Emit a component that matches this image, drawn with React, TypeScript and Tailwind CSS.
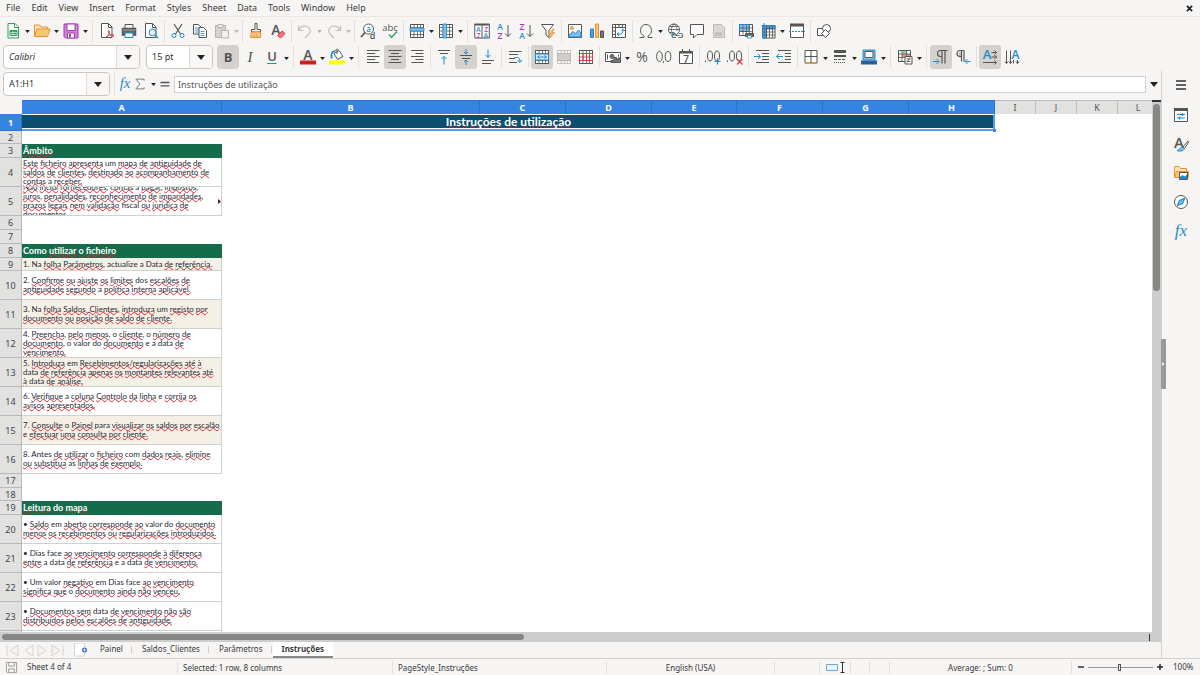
import React from 'react';
import clsx from 'clsx';

const GRAY = '#555553';
const BLUE = '#1e8bcd';
const SKY = '#83beec';
const GREEN = '#2fa05a';
const ORANGE = '#e8932f';
const PURPLE = '#a33fae';
const RED = '#e0393e';

interface IconProps {
  children: React.ReactNode;
  className?: string;
}

const Icon: React.FC<IconProps> = ({ children, className = 'h-4 w-4' }) => (
  <svg viewBox="0 0 16 16" fill="none" stroke={GRAY} className={clsx('shrink-0 overflow-visible', className)} aria-hidden="true">
    {children}
  </svg>
);

interface GlyphProps {
  x: number;
  y: number;
  size: number;
  fill?: string;
  weight?: number;
  italic?: boolean;
  serif?: boolean;
  children: string;
}

// Lettering that sits inside an icon
const Glyph: React.FC<GlyphProps> = ({ x, y, size, fill = GRAY, weight = 400, italic, serif, children }) => (
  <text
    x={x}
    y={y}
    fontSize={size}
    fill={fill}
    stroke="none"
    fontWeight={weight}
    fontStyle={italic ? 'italic' : 'normal'}
    fontFamily={serif ? 'Liberation Serif, serif' : 'Open Sans, sans-serif'}
    textAnchor="middle"
  >
    {children}
  </text>
);

const Grid: React.FC<{ color?: string }> = ({ color = GRAY }) => (
  <path d="M1.500 1.500h13v13h-13zM1.500 4.500h13M1.500 8h13M1.500 11.500h13M5 1.500v13M8.500 1.500v13M11.500 1.500v13" stroke={color} strokeWidth=".8" />
);

const icons: Record<string, React.ReactNode> = {
  new: (
    <>
      <path d="M3 .5h7l3.500 3.500v11h-10.500z" fill="#fff" stroke={GREEN} />
      <path d="M9.500 .5v4h4" stroke={GREEN} />
      <path d="M5 7.500h7v5h-7z" fill={GREEN} stroke={GREEN} />
      <path d="M5 9.500h7M5 11.500h7M8 8v4.500" stroke="#fff" strokeWidth=".6" />
    </>
  ),
  open: (
    <>
      <path d="M.5 13.500v-11.500h5l1.500 2h6.500v2" fill="#fbe3bd" stroke={ORANGE} />
      <path d="M.5 13.500l2.500-7.500h13l-2.500 7.500z" fill="#f9c674" stroke={ORANGE} />
    </>
  ),
  save: (
    <>
      <path d="M1 1h14v14h-12.500l-1.500-1.500z" fill="#cf83d8" stroke={PURPLE} />
      <path d="M4 1h8v6.500h-8z" fill="#fff" stroke={PURPLE} />
      <path d="M4.500 10h7v5h-7z" fill="#fff" stroke={PURPLE} />
      <path d="M6 11v3.500h2v-3.500z" fill={PURPLE} stroke="none" />
    </>
  ),
  pdf: (
    <>
      <path d="M2.500 .5h7l3.500 3.500v10.500h-10.500z" fill="#fff" />
      <path d="M9.500 .5v4h3.500" />
      <path d="M7 14.500c3-2 4-5 3-7-1-1-1 1 0 2.500s3 3.500 5 3.500M7 14c2-2 5-2.500 8-2" stroke={RED} />
    </>
  ),
  print: (
    <>
      <path d="M4 5.500v-4h8v4" fill="#fff" />
      <path d="M1.500 5.500h13v6.500h-13z" fill="#666" strokeWidth="1.500" />
      <path d="M1.500 7h13" stroke="#aaa" />
      <path d="M4 10h8v4.500h-8z" fill="#fff" stroke={BLUE} />
    </>
  ),
  preview: (
    <>
      <path d="M2.500 .5h7l3.500 3.500v10.500h-10.500z" fill="#fff" />
      <path d="M9.500 .5v4h3.500" />
      <circle cx="9.500" cy="9.500" r="3.300" fill="#e8f3fb" stroke={BLUE} />
      <path d="M12 12l3 3" stroke={BLUE} strokeWidth="1.400" />
    </>
  ),
  cut: (
    <>
      <path d="M4 1l6.500 10M12 1l-6.500 10" strokeWidth="1.200" />
      <circle cx="4" cy="12.500" r="2" stroke={BLUE} />
      <circle cx="12" cy="12.500" r="2" stroke={BLUE} />
    </>
  ),
  copy: (
    <>
      <path d="M1.500 1.500h5l2.500 2.500v7h-7.500z" fill="#fff" />
      <path d="M3 5h4M3 7h4M3 9h4" stroke={BLUE} strokeWidth=".8" />
      <path d="M7 4.500h4.500l3 3v7h-7.500z" fill="#fff" />
      <path d="M8.500 8.500h4M8.500 10.500h4M8.500 12.500h4" stroke={BLUE} strokeWidth=".8" />
    </>
  ),
  paste: (
    <>
      <path d="M1.500 2.500h10v12h-10z" fill="#d6d4d1" stroke="#b5b3b0" />
      <path d="M4 1.500h5v3h-5z" fill="#eee" stroke="#b5b3b0" />
      <path d="M7.500 7.500h7v7.500h-7z" fill="#f1f0ef" stroke="#b5b3b0" />
    </>
  ),
  clone: (
    <>
      <path d="M7 .5h2v6h3.500v2.500h-9v-2.500h3.500z" fill="#fff" />
      <path d="M3.500 9h9v5.500h-10z" fill="#f9c98a" stroke={ORANGE} />
      <path d="M6 11.500v3M9 11.500v3" stroke={ORANGE} />
    </>
  ),
  clear: (
    <>
      <Glyph x={6} y={12} size={14} weight={600}>A</Glyph>
      <path d="M7.500 12.500l4.500-4.500 3 2.500-4.500 4.500z" fill="#f2777b" stroke={RED} />
    </>
  ),
  undo: <path d="M1.500 2.500v5h5M2 7c2-4 5-4.500 8-3.500 4 1.500 4 5 2 7.500l-4 4" stroke="#c3c1be" strokeWidth="1.200" />,
  redo: <path d="M14.500 2.500v5h-5M14 7c-2-4-5-4.500-8-3.500-4 1.500-4 5-2 7.500l4 4" stroke="#c3c1be" strokeWidth="1.200" />,
  find: (
    <>
      <circle cx="8.500" cy="6" r="5" fill="#fff" />
      <path d="M5 9.500l-4 4.500" strokeWidth="1.800" />
      <Glyph x={8.500} y={8.500} size={8} fill={BLUE} weight={600}>a</Glyph>
      <Glyph x={12.500} y={15.500} size={9} weight={600}>d</Glyph>
    </>
  ),
  spell: (
    <>
      <Glyph x={8} y={7.500} size={9.500}>abc</Glyph>
      <path d="M7 11.500l2.500 3 5.500-6" stroke={GREEN} strokeWidth="1.300" />
    </>
  ),
  row: (
    <>
      <path d="M1.500 1.500h13v13h-13z" fill="#fff" />
      <Grid />
      <path d="M1 5h14v3h-14z" fill={SKY} stroke={BLUE} strokeWidth=".8" />
    </>
  ),
  column: (
    <>
      <path d="M1.500 1.500h13v13h-13z" fill="#fff" />
      <Grid />
      <path d="M5 1h3.500v14h-3.500z" fill={SKY} stroke={BLUE} strokeWidth=".8" />
    </>
  ),
  sort: (
    <>
      <path d="M.8 1.500h14.500v13.500h-14.500zM8 1.500v13.500" fill="#fff" />
      <path d="M.5 1.500h15" strokeWidth="2" />
      <Glyph x={4.500} y={8.500} size={6.500} fill={BLUE} weight={600}>A</Glyph>
      <Glyph x={4.500} y={14.500} size={6.500} fill={PURPLE} weight={600}>Z</Glyph>
      <Glyph x={12} y={8.500} size={6.500} fill={PURPLE} weight={600}>Z</Glyph>
      <Glyph x={12} y={14.500} size={6.500} fill={BLUE} weight={600}>A</Glyph>
    </>
  ),
  asc: (
    <>
      <Glyph x={4} y={7} size={8.500} fill={BLUE} weight={600}>A</Glyph>
      <Glyph x={4} y={15.500} size={8.500} fill={PURPLE} weight={600}>Z</Glyph>
      <path d="M12 2v11.500M9 10.500l3 3 3-3" />
    </>
  ),
  desc: (
    <>
      <Glyph x={4} y={7} size={8.500} fill={PURPLE} weight={600}>Z</Glyph>
      <Glyph x={4} y={15.500} size={8.500} fill={BLUE} weight={600}>A</Glyph>
      <path d="M12 2v11.500M9 10.500l3 3 3-3" />
    </>
  ),
  filter: (
    <>
      <path d="M1.500 1.500h12l-4.500 6v7l-3-2.500v-4.500z" fill="#fff" />
      <path d="M13 6l-4 5h2.500l-2 4.500 5-6h-2.500l2-3.500z" fill="#fbc57c" stroke={ORANGE} strokeWidth=".8" />
    </>
  ),
  image: (
    <>
      <path d="M1.500 1.500h13v13h-13z" fill="#fff" />
      <circle cx="5" cy="5" r="1.500" fill="#f9c674" stroke={ORANGE} />
      <path d="M2 14v-2l4-3.500 2.500 2 3-3.500 2.500 3v4z" fill={SKY} stroke={BLUE} />
    </>
  ),
  chart: (
    <>
      <path d="M1.500 6h3v8.500h-3z" fill="#4f9bd6" stroke={BLUE} />
      <path d="M6.500 1h3v13.500h-3z" fill="#fbc57c" stroke={ORANGE} />
      <path d="M11.500 8h3v6.500h-3z" fill="#777" />
    </>
  ),
  pivot: (
    <>
      <path d="M1.500 1.500h13v13h-13zM1.500 4.500h13M4.500 1.500v13M8 1.500v3M11.500 1.500v3M1.500 8h3M1.500 11.500h3" fill="#fff" />
      <path d="M6.500 11c4 1 5.500-1 5.500-4M10.500 8l1.500-2 2 2M8 9.500l-2 1.500 2 2" stroke={BLUE} />
    </>
  ),
  omega: <path d="M1.500 14.500h4.500v-1.500c-2.500-1.500-3.500-3-3.500-5.500 0-3.500 2.500-6 5.500-6s5.500 2.500 5.500 6c0 2.500-1 4-3.500 5.500v1.500h4.500" />,
  link: (
    <>
      <circle cx="7" cy="6.500" r="5.500" fill="#fff" />
      <path d="M1.500 6.500h11M2.500 3.500h9M2.500 9.500h5M7 1c-4 4-3 8 0 11M7 1c3 2 3 5 3 7" strokeWidth=".8" />
      <path d="M8.500 10.500h-1.500a2 2 0 000 4h2M12 10.500h1.500a2 2 0 010 4h-2M8.500 12.500h4" stroke={BLUE} strokeWidth="1.200" />
    </>
  ),
  comment: <path d="M1.500 1.500h13v10h-6.500l-3.500 3.500v-3.500h-3z" fill="#fff" />,
  header: (
    <>
      <path d="M2.500 1.500h8l3 3v10h-11z" fill="#dad8d6" stroke="#bdbbb8" />
      <path d="M4 9h7v4h-7z" fill="#c5c3c0" stroke="none" />
    </>
  ),
  printArea: (
    <>
      <path d="M1.500 1.500h13v11h-13z" fill="#fff" />
      <path d="M1.500 1.500h9.500v7h-9.500z" fill={SKY} stroke={BLUE} />
      <path d="M1.500 5h13M1.500 8.500h13M5 1.500v11M8.500 1.500v11M11.500 1.500v11" strokeWidth=".7" />
      <path d="M7.500 10.500h8v3h-8z" fill="#666" />
      <path d="M9.500 12.500h4v2.500h-4z" fill="#fff" stroke={BLUE} strokeWidth=".8" />
    </>
  ),
  freeze: (
    <>
      <path d="M2.500 2.500h12.500v12.500h-12.500z" fill="#fff" />
      <path d="M2.500 2.500h12.500v3h-8.500v9.500h-4z" fill="#4f9bd6" stroke={BLUE} />
      <path d="M2.500 6h12.500M2.500 9h12.500M2.500 12h12.500M6.500 2.500v12.500M9.500 2.500v12.500M12.500 2.500v12.500" strokeWidth=".8" />
      <path d="M4 0v5M1.500 2.500h5" stroke={BLUE} />
    </>
  ),
  split: (
    <>
      <path d="M1.500 2v12.500h13v-12.500" fill="#fff" />
      <path d="M1 2h14" strokeWidth="3" />
      <path d="M0 8.500h16" stroke={BLUE} strokeDasharray="2 1" />
    </>
  ),
  shapes: (
    <>
      <path d="M1.500 5.500h7v7h-7z" fill="#fff" />
      <circle cx="10.500" cy="5.500" r="4" fill="#fff" />
      <path d="M9.500 6.500l4 4-4 4-4-4z" fill="#fff" />
    </>
  ),
  bold: <Glyph x={8} y={12.500} size={13} weight={700}>B</Glyph>,
  italic: <Glyph x={8} y={13} size={15} italic serif>I</Glyph>,
  underline: (
    <>
      <Glyph x={8} y={12} size={13} weight={600}>U</Glyph>
      <path d="M3 14.500h9.500" stroke={BLUE} />
    </>
  ),
  fontColor: (
    <>
      <Glyph x={8} y={10.500} size={14} weight={600}>A</Glyph>
      <path d="M0 13.500h16" stroke="#c9211e" strokeWidth="4" />
    </>
  ),
  fillColor: (
    <>
      <path d="M5 4.500l5-3 4 6-5.500 3z" fill="#fff" />
      <path d="M8 1v4M6 2c1-2 3-2 3-1" />
      <path d="M6 2.500c-4-.5-3.500 4-3.500 7" stroke={BLUE} strokeWidth="1.800" />
      <path d="M0 13.500h16" stroke="#ffff00" strokeWidth="4" />
    </>
  ),
  left: <path d="M2 1.500h12.500M2 4.500h8M2 7.500h12.500M2 10.500h8M2 13.500h12" />,
  center: <path d="M1.500 1.500h13M4 4.500h8M1.500 7.500h13M4 10.500h8M1.500 13.500h13" />,
  right: <path d="M2 1.500h12.500M6.500 4.500h8M2 7.500h12.500M6.500 10.500h8M2.500 13.500h12" />,
  top: (
    <>
      <path d="M2 1.500h12M4 4.500h8" />
      <path d="M8 15.500v-8M5.500 10l2.500-2.500 2.500 2.500" stroke={BLUE} />
    </>
  ),
  middle: (
    <>
      <path d="M2 6.500h12M4 9.500h8" />
      <path d="M8 0v5M6 3l2 2 2-2M8 16v-5M6 13l2-2 2 2" stroke={BLUE} />
    </>
  ),
  bottom: (
    <>
      <path d="M2 11.500h12M2 14.500h9" />
      <path d="M8 .5v8M5.500 6l2.500 2.500 2.500-2.500" stroke={BLUE} />
    </>
  ),
  wrap: (
    <>
      <path d="M2 2.500h12.500M2 5.500h9M2 9.500h6M2 13.500h8" />
      <path d="M7.500 8.500h3q2.500 0 2.500 4.500M10.500 11.500l2.500 2 2-2.500" stroke={BLUE} />
    </>
  ),
  merge: (
    <>
      <path d="M1.500 1.500h13v13h-13z" fill="#fff" />
      <Grid />
      <path d="M1.500 5h13v6h-13z" fill="#d9ecfa" stroke={BLUE} />
      <path d="M4 8h8M5.500 6.500l-2 1.500 2 1.500M10.500 6.500l2 1.500-2 1.500" stroke={BLUE} />
    </>
  ),
  mergeOff: (
    <>
      <Grid color="#b9b7b4" />
      <path d="M1.500 4.500h13v7h-13z" fill="#cfcdca" stroke="#b9b7b4" />
    </>
  ),
  unmerge: (
    <>
      <path d="M1.500 1.500h13v13h-13z" fill="#fff" />
      <Grid />
      <path d="M1.500 4.500h13v7h-13zM5 4.500v7M8.500 4.500v7M11.500 4.500v7" stroke={RED} />
    </>
  ),
  currency: (
    <>
      <path d="M.5 3.500h15v9h-15z" fill="#fff" />
      <circle cx="7" cy="7.500" r="2" fill="#777" />
      <path d="M2.500 5.500v5M13.500 5.500v2" />
      <path d="M6 13.500v-2h3v-3h2.500v2h1.500v-1.500h2.500v4.500z" fill="#777" />
    </>
  ),
  percent: <Glyph x={8} y={12.500} size={14}>%</Glyph>,
  decimal: (
    <>
      <ellipse cx="3.500" cy="7.500" rx="2.800" ry="5" />
      <ellipse cx="12" cy="7.500" rx="2.800" ry="5" />
      <path d="M7.800 12l-.6 2" />
    </>
  ),
  date: (
    <>
      <path d="M1.500 2.500h13v12h-13z" fill="#fff" />
      <path d="M1.500 3.500h13" strokeWidth="2" />
      <path d="M4.500 0v3M11.500 0v3" />
      <Glyph x={8} y={13.500} size={10} weight={600}>7</Glyph>
    </>
  ),
  addDecimal: (
    <>
      <path d="M.5 11.500v1.500" />
      <ellipse cx="5" cy="7" rx="2.500" ry="5" />
      <ellipse cx="12" cy="7" rx="2.500" ry="5" />
      <path d="M12.500 9.500v6M9.500 12.500h6" stroke={BLUE} strokeWidth="1.200" />
    </>
  ),
  delDecimal: (
    <>
      <path d="M.5 11.500v1.500" />
      <ellipse cx="5" cy="7" rx="2.500" ry="5" />
      <ellipse cx="12" cy="7" rx="2.500" ry="5" />
      <path d="M10 10l5.500 5.500M15.500 10l-5.500 5.500" stroke={RED} strokeWidth="1.200" />
    </>
  ),
  indent: (
    <>
      <path d="M2 1.500h13M8 4.500h7M8 7.500h7M8 10.500h7M2 13.500h13" />
      <path d="M0 7.500h6.500M4 5l2.500 2.500-2.500 2.500" stroke={BLUE} />
    </>
  ),
  outdent: (
    <>
      <path d="M2 1.500h13M9 4.500h6M9 7.500h6M9 10.500h6M2 13.500h13" />
      <path d="M7 7.500h-6.500M3 5l-2.500 2.500 2.500 2.500" stroke={BLUE} />
    </>
  ),
  border: (
    <>
      <path d="M2 1.500h12v12.500h-12zM8 1.500v12.500M2 7.500h12" fill="#fff" />
      <path d="M2 14h12" stroke={ORANGE} />
    </>
  ),
  borderStyle: (
    <>
      <path d="M2 2.500h12" strokeWidth="3" />
      <path d="M2 7h12" strokeWidth="2" />
      <path d="M2 10.500h12" strokeDasharray="3 1" />
      <path d="M2 13.500h12" strokeDasharray="1 1" />
    </>
  ),
  borderColor: (
    <>
      <path d="M2 11v-10h12v10z" fill={SKY} stroke={BLUE} />
      <path d="M4 2.500h8v6h-8z" fill="#fff" />
      <path d="M0 13.500h16" stroke="#2a6099" strokeWidth="4" />
    </>
  ),
  conditional: (
    <>
      <path d="M1.500 1.500h12v11h-12z" fill="#fff" />
      <path d="M5 2h5v3h-5z" fill="#8fd6a3" stroke="none" />
      <path d="M5 5h8v3h-8z" fill="#f28b8d" stroke="none" />
      <path d="M1.500 5h12M1.500 8.500h12M5 1.500v11M9.500 1.500v5" strokeWidth=".8" />
      <path d="M8 7.500h7v7.500h-7z" fill="#fff" />
      <path d="M9.500 10h4M9.500 12.500h4M13 8.500l-3 5" strokeWidth=".9" />
    </>
  ),
  ltr: (
    <>
      <path d="M14.500 1.500h-7a3 3 0 000 6h1.500M9 1.500v13M12 1.500v13" strokeWidth="1.200" />
      <path d="M0 12.500h6M3.500 10l2.500 2.500-2.500 2.500" stroke={BLUE} />
    </>
  ),
  rtl: (
    <>
      <path d="M9 1.500h-4a3 3 0 000 6h1.500M6.500 1.500v11M9 1.500v11" strokeWidth="1.200" />
      <path d="M4 3h2v4h-2z" fill="#bbb" stroke="none" />
      <path d="M15.500 12.500h-5M12.500 10l-2.500 2.500 2.500 2.500" stroke={BLUE} />
    </>
  ),
  dirH: (
    <>
      <Glyph x={5} y={10} size={13} fill={BLUE} weight={600}>A</Glyph>
      <path d="M9.500 3.500h5M9.500 8h5M1 13.500h13M12.500 1.500l2 2-2 2M12.500 6l2 2-2 2M12.500 11.500l2 2-2 2" />
    </>
  ),
  dirV: (
    <>
      <Glyph x={11.500} y={9.500} size={12} fill={BLUE} weight={600}>A</Glyph>
      <path d="M2.500 1.500v13M6.500 1.500v13M9.500 11v3.500M13.500 11v3.500M.8 12.500l1.700 2 1.700-2M4.800 12.500l1.700 2 1.700-2M11.800 12.500l1.700 2 1.700-2" />
    </>
  ),
  formula: <Glyph x={8} y={12.500} size={17} fill={BLUE} italic serif>fx</Glyph>,
  sum: <path d="M13.500 3.500v-2h-11l5.500 6.500-5.500 6.500h11v-2" />,
  equals: <path d="M2 6h12M2 10.500h12" strokeWidth="1.800" />,
  menu: <path d="M3 3h10M3 7h10M3 11h10" strokeWidth="1.600" stroke="#333" />,
  properties: (
    <>
      <path d="M1.500 1.500h13v13h-13z" fill="#fff" />
      <path d="M1 2.500h14" strokeWidth="3" />
      <path d="M4 7.500h8M4 11h8" stroke={BLUE} />
      <path d="M9.500 6v3M6.500 9.500v3" stroke={BLUE} strokeWidth="1.400" />
    </>
  ),
  styles: (
    <>
      <Glyph x={6} y={11.500} size={15} weight={600}>A</Glyph>
      <path d="M15 5l-5 6 1.500 1.500 4-6z" fill="#fff" />
      <path d="M4 14.500c2 0 3-3 5.500-3.500l2 1.500c-1 3-5 3-7.500 2z" fill={SKY} stroke={BLUE} />
    </>
  ),
  gallery: (
    <>
      <path d="M1.500 12.500v-11h4.500l1.500 2h6v3" fill="#fbe3bd" stroke={ORANGE} />
      <path d="M1.500 12.500l2-6h12v6z" fill="#f9c674" stroke={ORANGE} />
      <path d="M6.500 7.500h8v7h-8z" fill="#fff" />
      <path d="M7 14v-2l2.500-2 2 1.500 2.500-2v4.500z" fill={BLUE} stroke="none" />
    </>
  ),
  navigator: (
    <>
      <circle cx="8" cy="8" r="6.500" fill="#fff" />
      <path d="M11.500 4.500l-2 5-5 2 2-5z" fill={SKY} stroke={BLUE} strokeWidth="1.200" />
    </>
  ),
};

const Caret: React.FC<{ faded?: boolean; large?: boolean }> = ({ faded, large }) => (
  <svg viewBox="0 0 8 5" className={large ? 'h-[5px] w-2' : 'h-[3px] w-[5px]'} fill={faded ? '#b8b6b3' : '#222'} aria-hidden="true">
    <path d="M0 0h8l-4 5z" />
  </svg>
);

interface Tool {
  icon: string;
  label: string;
  menu?: boolean;
  active?: boolean;
  disabled?: boolean;
}

const standardTools: Tool[][] = [
  [
    { icon: 'new', label: 'New', menu: true },
    { icon: 'open', label: 'Open', menu: true },
    { icon: 'save', label: 'Save', menu: true },
  ],
  [
    { icon: 'pdf', label: 'Export as PDF' },
    { icon: 'print', label: 'Print' },
    { icon: 'preview', label: 'Print Preview' },
  ],
  [
    { icon: 'cut', label: 'Cut' },
    { icon: 'copy', label: 'Copy' },
    { icon: 'paste', label: 'Paste', menu: true, disabled: true },
  ],
  [
    { icon: 'clone', label: 'Clone Formatting' },
    { icon: 'clear', label: 'Clear Direct Formatting' },
  ],
  [
    { icon: 'undo', label: 'Undo', menu: true, disabled: true },
    { icon: 'redo', label: 'Redo', menu: true, disabled: true },
  ],
  [
    { icon: 'find', label: 'Find and Replace' },
    { icon: 'spell', label: 'Spelling' },
  ],
  [
    { icon: 'row', label: 'Row', menu: true },
    { icon: 'column', label: 'Column', menu: true },
  ],
  [
    { icon: 'sort', label: 'Sort' },
    { icon: 'asc', label: 'Sort Ascending' },
    { icon: 'desc', label: 'Sort Descending' },
    { icon: 'filter', label: 'AutoFilter' },
  ],
  [
    { icon: 'image', label: 'Image' },
    { icon: 'chart', label: 'Chart' },
    { icon: 'pivot', label: 'Pivot Table' },
  ],
  [
    { icon: 'omega', label: 'Special Character', menu: true },
    { icon: 'link', label: 'Hyperlink' },
    { icon: 'comment', label: 'Comment' },
    { icon: 'header', label: 'Headers and Footers', disabled: true },
  ],
  [
    { icon: 'printArea', label: 'Define Print Area' },
    { icon: 'freeze', label: 'Freeze Rows and Columns', menu: true },
    { icon: 'split', label: 'Split Window' },
  ],
  [{ icon: 'shapes', label: 'Show Draw Functions' }],
];

const formatTools: Tool[][] = [
  [
    { icon: 'bold', label: 'Bold', active: true },
    { icon: 'italic', label: 'Italic' },
    { icon: 'underline', label: 'Underline', menu: true },
  ],
  [
    { icon: 'fontColor', label: 'Font Color', menu: true },
    { icon: 'fillColor', label: 'Background Color', menu: true },
  ],
  [
    { icon: 'left', label: 'Align Left' },
    { icon: 'center', label: 'Center Horizontally', active: true },
    { icon: 'right', label: 'Align Right' },
  ],
  [
    { icon: 'top', label: 'Align Top' },
    { icon: 'middle', label: 'Center Vertically', active: true },
    { icon: 'bottom', label: 'Align Bottom' },
  ],
  [{ icon: 'wrap', label: 'Wrap Text' }],
  [
    { icon: 'merge', label: 'Merge and Center Cells', active: true },
    { icon: 'mergeOff', label: 'Merge Cells', disabled: true },
    { icon: 'unmerge', label: 'Unmerge Cells' },
  ],
  [
    { icon: 'currency', label: 'Format as Currency', menu: true },
    { icon: 'percent', label: 'Format as Percent' },
    { icon: 'decimal', label: 'Format as Number' },
    { icon: 'date', label: 'Format as Date' },
  ],
  [
    { icon: 'addDecimal', label: 'Add Decimal Place' },
    { icon: 'delDecimal', label: 'Delete Decimal Place' },
  ],
  [
    { icon: 'indent', label: 'Increase Indent' },
    { icon: 'outdent', label: 'Decrease Indent' },
  ],
  [
    { icon: 'border', label: 'Borders', menu: true },
    { icon: 'borderStyle', label: 'Border Style', menu: true },
    { icon: 'borderColor', label: 'Border Color', menu: true },
  ],
  [{ icon: 'conditional', label: 'Conditional', menu: true }],
  [
    { icon: 'ltr', label: 'Left-To-Right', active: true },
    { icon: 'rtl', label: 'Right-To-Left' },
  ],
  [
    { icon: 'dirH', label: 'Text direction from left to right', active: true },
    { icon: 'dirV', label: 'Text direction from top to bottom' },
  ],
];

const Separator: React.FC<{ wide?: boolean }> = ({ wide }) => (
  <span className={clsx('h-[22px] w-px shrink-0 bg-[#e3e0dd]', wide ? 'mx-[3px]' : 'mx-0.5')} />
);

const endsWithMenu = (group: Tool[]) => {
  const last = group[group.length - 1];
  return Boolean(last.menu && !last.disabled);
};

const ToolGroups: React.FC<{ groups: Tool[][] }> = ({ groups }) => (
  <>
    {groups.map((group, i) => (
      <React.Fragment key={i}>
        {i > 0 && <Separator wide={endsWithMenu(groups[i - 1])} />}
        {group.map(tool => (
          <React.Fragment key={tool.icon}>
            <button
              type="button"
              aria-label={tool.label}
              disabled={tool.disabled}
              className={clsx('flex h-6 w-[22px] shrink-0 items-center justify-center rounded-[3px]', tool.active && 'bg-[#d5d2ce]')}
            >
              <Icon>{icons[tool.icon]}</Icon>
            </button>
            {tool.menu && (
              <button type="button" aria-label={`${tool.label} options`} className="flex h-6 w-[7px] shrink-0 items-center justify-center pt-0.5">
                <Caret faded={tool.disabled} />
              </button>
            )}
          </React.Fragment>
        ))}
      </React.Fragment>
    ))}
  </>
);

interface ComboProps {
  label: string;
  value: string;
  className: string;
  italic?: boolean;
}

const Combo: React.FC<ComboProps> = ({ label, value, className, italic }) => (
  <div className={clsx('flex h-6 shrink-0 overflow-hidden rounded border border-[#cdc7c2] bg-white', className)}>
    <input aria-label={label} defaultValue={value} className={clsx('min-w-0 flex-1 px-[5px] text-[#333] outline-none', italic && 'italic')} />
    <button type="button" aria-label={`${label} list`} className="flex w-[23px] items-center justify-center border-l border-[#dedbd8] bg-[#f8f7f6]">
      <Caret large />
    </button>
  </div>
);

interface SheetRow {
  height: string;
  kind?: 'title' | 'head' | 'plain' | 'band';
  lines?: string[];
  overflow?: boolean;
}

// Words between brackets are flagged by the spell checker
const rows: SheetRow[] = [
  { height: 'h-[17px]', kind: 'title', lines: ['[Instruções] [de] [utilização]'] },
  { height: 'h-[13px]' },
  { height: 'h-[14px]', kind: 'head', lines: ['[Âmbito]'] },
  {
    height: 'h-[29px]',
    kind: 'plain',
    lines: [
      '[Este] [ficheiro] [apresenta] um [mapa] [de] [antiguidade] [de]',
      '[saldos] [de] [clientes], [destinado] [ao] [acompanhamento] [de]',
      '[contas] a [receber.]',
    ],
  },
  {
    height: 'h-[29px]',
    kind: 'plain',
    overflow: true,
    lines: [
      '[Não] [inclui] [fornecedores], [contas] a [pagar], [impostos],',
      '[juros], [penalidades], [reconhecimento] [de] [imparidades],',
      '[prazos] [legais] [nem] [validação] fiscal [ou] [jurídica] [de]',
      '[documentos].',
    ],
  },
  { height: 'h-[14px]' },
  { height: 'h-[14px]' },
  { height: 'h-[14px]', kind: 'head', lines: ['Como [utilizar] o [ficheiro]'] },
  { height: 'h-[13px]', kind: 'band', lines: ['1. Na [folha] [Parâmetros], actualize a Data [de] [referência.]'] },
  {
    height: 'h-[29px]',
    kind: 'plain',
    lines: ['2. [Confirme] [ou] [ajuste] [os] [limites] dos [escalões] [de]', '[antiguidade] [segundo] a [política] [interna] [aplicável.]'],
  },
  {
    height: 'h-[29px]',
    kind: 'band',
    lines: ['3. Na [folha] [Saldos_Clientes], [introduza] um [registo] [por]', '[documento] [ou] [posição] [de] [saldo] [de] [cliente.]'],
  },
  {
    height: 'h-[29px]',
    kind: 'plain',
    lines: ['4. [Preencha], [pelo] [menos], o [cliente], o [número] [de]', '[documento], o valor do [documento] e a data [de]', '[vencimento.]'],
  },
  {
    height: 'h-[29px]',
    kind: 'band',
    lines: [
      '5. [Introduza] em [Recebimentos/regularizações] [até] [à]',
      'data [de] [referência] [apenas] [os] [montantes] [relevantes] [até]',
      '[à] data [de] [análise.]',
    ],
  },
  {
    height: 'h-[29px]',
    kind: 'plain',
    lines: ['6. [Verifique] a [coluna] [Controlo] [da] [linha] e [corrija] [os]', '[avisos] [apresentados.]'],
  },
  {
    height: 'h-[29px]',
    kind: 'band',
    lines: ['7. [Consulte] o [Painel] para [visualizar] [os] [saldos] [por] [escalão]', 'e [efectuar] [uma] [consulta] [por] [cliente.]'],
  },
  {
    height: 'h-[29px]',
    kind: 'plain',
    lines: ['8. Antes [de] [utilizar] o [ficheiro] com [dados] [reais], [elimine]', '[ou] [substitua] as [linhas] [de] [exemplo.]'],
  },
  { height: 'h-[14px]' },
  { height: 'h-[13px]' },
  { height: 'h-[14px]', kind: 'head', lines: ['[Leitura] do [mapa]'] },
  {
    height: 'h-[29px]',
    kind: 'plain',
    lines: ['• [Saldo] em [aberto] [corresponde] [ao] valor do [documento]', '[menos] [os] [recebimentos] [ou] [regularizações] [introduzidos.]'],
  },
  {
    height: 'h-[29px]',
    kind: 'plain',
    lines: ['• Dias face [ao] [vencimento] [corresponde] [à] [diferença]', '[entre] a data [de] [referência] e a data [de] [vencimento.]'],
  },
  {
    height: 'h-[29px]',
    kind: 'plain',
    lines: ['• Um valor [negativo] em Dias face [ao] [vencimento]', '[significa] [que] o [documento] [ainda] [não] [venceu.]'],
  },
  {
    height: 'h-[29px]',
    kind: 'plain',
    lines: ['• [Documentos] [sem] data [de] [vencimento] [não] [são]', '[distribuídos] [pelos] [escalões] [de] [antiguidade.]'],
  },
  { height: 'h-[29px]', kind: 'plain' },
];

const columns = [
  { name: 'A', width: 'w-[200px]' },
  { name: 'B', width: 'w-[258px]' },
  { name: 'C', width: 'w-[86px]' },
  { name: 'D', width: 'w-[86px]' },
  { name: 'E', width: 'w-[85px]' },
  { name: 'F', width: 'w-[86px]' },
  { name: 'G', width: 'w-[86px]' },
  { name: 'H', width: 'w-[86px]' },
  { name: 'I', width: 'w-[41px]' },
  { name: 'J', width: 'w-[41px]' },
  { name: 'K', width: 'w-[41px]' },
  { name: 'L', width: 'w-[41px]' },
];

const SpellText: React.FC<{ text: string }> = ({ text }) => (
  <>
    {text.split(/(\[[^\]]+\])/).map((part, i) =>
      part.startsWith('[') ? (
        <span key={i} className="underline decoration-[#e0262b] decoration-wavy decoration-1 -underline-offset-1 [text-decoration-skip-ink:none]">
          {part.slice(1, -1)}
        </span>
      ) : (
        part
      )
    )}
  </>
);

const cellStyles = {
  title: 'bg-[#0b4f6c] text-white font-bold text-[12px] leading-[15px]',
  head: 'bg-[#146c4b] text-white font-bold text-[9px] leading-[11px] border-b border-[#146c4b]',
  plain: 'bg-white text-[#1f2937] text-[8px] leading-[9px] border-b border-r border-[#ccd3d0]',
  band: 'bg-[#f5f0e6] text-[#1f2937] text-[8px] leading-[9px] border-b border-r border-[#ccd3d0]',
};

const Sheet = () => (
  <div className="min-h-0 min-w-0 flex-1 overflow-hidden bg-white">
    <table className="w-[1159px] table-fixed border-separate border-spacing-0">
      <thead>
        <tr className="h-[14px] text-[9px] leading-[9px]">
          <th className="w-[22px] bg-[#f6f5f4] p-0" aria-label="Select all" />
          {columns.map((col, i) => (
            <th
              key={col.name}
              scope="col"
              className={clsx(
                'border-r border-t p-0',
                col.width,
                i < 8 ? 'border-[#2a72cc] bg-[#3584e4] font-bold text-white' : 'border-[#bdbdbd] bg-[#e1e1e0] font-normal text-[#555]'
              )}
            >
              {col.name}
            </th>
          ))}
        </tr>
      </thead>
      <tbody>
        {rows.map((row, i) => (
          <tr key={i} className={row.height}>
            <th
              scope="row"
              className={clsx(
                'border-b border-r p-0 text-[9px] leading-[9px]',
                i === 0 ? 'border-[#2a72cc] bg-[#3584e4] font-bold text-white' : 'border-[#b9b9b9] bg-[#e1e1e0] font-normal text-[#444]'
              )}
            >
              {i + 1}
            </th>
            {row.kind === 'title' && (
              <td colSpan={8} className={clsx('relative p-0 text-center align-top font-[Lato,sans-serif]', cellStyles.title)}>
                <SpellText text={row.lines![0]} />
                <span className="absolute inset-0 border-b-2 border-r-2 border-t border-[#5b9df0] border-t-white" />
                <span className="absolute bottom-0.5 left-0 right-0.5 h-px bg-white" />
                <span className="absolute -bottom-px -right-px h-[3px] w-[3px] bg-[#3584e4]" />
              </td>
            )}
            {row.kind && row.kind !== 'title' && (
              <td className={clsx('relative p-0 font-[Lato,sans-serif]', cellStyles[row.kind])}>
                <div className="absolute inset-0 flex flex-col justify-center overflow-hidden whitespace-nowrap px-px">
                  {row.lines?.map(line => (
                    <div key={line}>
                      <SpellText text={line} />
                    </div>
                  ))}
                </div>
                {row.overflow && (
                  <svg viewBox="0 0 3 5" className="absolute right-0 top-3 h-[5px] w-[3px]" fill="#5b1a1a" aria-hidden="true">
                    <path d="M0 0l3 2.500-3 2.500z" />
                  </svg>
                )}
              </td>
            )}
          </tr>
        ))}
      </tbody>
    </table>
  </div>
);

const tabs = ['Painel', 'Saldos_Clientes', 'Parâmetros', 'Instruções'];

const SheetTabs = () => (
  <div className="flex h-4 shrink-0 items-stretch">
    <div className="flex w-[74px] items-center pl-[5px]">
      {['M2 2v11M13 2l-8 5.500 8 5.500z', 'M13 2l-8 5.500 8 5.500z', 'M3 2l8 5.500-8 5.500z', 'M13 2v11M2 2l8 5.500-8 5.500z'].map((d, i) => (
        <button key={i} type="button" aria-label={['First sheet', 'Previous sheet', 'Next sheet', 'Last sheet'][i]} disabled className="w-[15px]">
          <svg viewBox="0 0 15 15" className="h-[15px] w-[15px]" fill="none" stroke="#d5d3d0" aria-hidden="true">
            <path d={d} />
          </svg>
        </button>
      ))}
    </div>
    <button type="button" aria-label="Add sheet" className="flex w-[17px] items-center">
      <svg viewBox="0 0 14 14" className="h-[14px] w-[14px]" aria-hidden="true">
        <path d="M.5 0h10v13h-10z" fill="#fff" stroke="#dad8d5" />
        <circle cx="10.500" cy="7" r="2.500" fill="#2f6fc0" />
        <path d="M10.500 5.500v3M9 7h3" stroke="#fff" strokeWidth=".8" />
      </svg>
    </button>
    <div className="flex gap-px">
      {tabs.map((tab, i) => (
        <button
          key={tab}
          type="button"
          className={clsx(
            'flex items-center px-[9px] text-[8px] leading-[10px]',
            i === 3 ? 'border-b-2 border-[#888] bg-white font-bold' : 'pb-0.5',
            i < 3 && 'relative after:absolute after:right-0 after:top-1 after:h-[7px] after:w-px after:bg-[#cfccc9]'
          )}
        >
          {tab}
        </button>
      ))}
    </div>
  </div>
);

const sidebarTools = [
  ['menu', 'Sidebar Settings'],
  ['properties', 'Properties'],
  ['styles', 'Styles'],
  ['gallery', 'Gallery'],
  ['navigator', 'Navigator'],
  ['formula', 'Functions'],
];

const Sidebar = () => (
  <aside className="relative flex w-[39px] shrink-0 flex-col items-center border-l border-[#d3d0cd]">
    {sidebarTools.map(([icon, label]) => (
      <button key={icon} type="button" aria-label={label} className="flex h-[29px] w-7 items-center justify-center">
        <Icon>{icons[icon]}</Icon>
      </button>
    ))}
    <button type="button" aria-label="Hide sidebar" className="absolute -left-px top-[268px] flex h-[50px] w-[5px] items-center justify-center bg-[#999]">
      <svg viewBox="0 0 3 4" className="h-1 w-[3px]" fill="#e8e8e8" aria-hidden="true">
        <path d="M0 0l3 2-3 2z" />
      </svg>
    </button>
  </aside>
);

const StatusBar = () => (
  <footer className="flex h-[17px] shrink-0 items-center border-t border-[#d3d0cd] text-[8px] leading-[14px] [&>*]:h-[13px] [&>*+*]:border-l [&>*+*]:border-[#e3e0dd]">
    <div className="flex grow basis-[177px] items-center">
      <svg viewBox="0 0 14 14" className="ml-[5px] mr-[9px] h-[13px] w-[13px]" fill="none" stroke="#9a9895" aria-hidden="true">
        <path d="M1.500 1.500h11v11h-10l-1-1zM4 1.500v4h6v-4M4 12.500v-4h6v4" />
      </svg>
      Sheet 4 of 4
    </div>
    <div className="grow basis-[215px] pl-[5px]">Selected: 1 row, 8 columns</div>
    <div className="grow basis-[214px] pl-[5px]">PageStyle_Instruções</div>
    <div className="grow basis-[168px] text-center">English (USA)</div>
    <div className="basis-[45px]" />
    <div className="flex basis-[31px] items-center pl-1.5">
      <svg viewBox="0 0 22 13" className="h-[13px] w-[22px]" fill="none" aria-hidden="true">
        <path d="M.5 3.500h11v6h-11z" fill="#e8f3fb" stroke="#6ba9d6" />
        <path d="M14.500 1.500h4M14.500 11.500h4M16.500 1.500v10" stroke="#333" />
      </svg>
    </div>
    <div className="basis-[19px]" />
    <div className="basis-5" />
    <div className="grow basis-[182px] text-center">Average: ; Sum: 0</div>
    <div className="flex basis-[129px] items-center pl-[5px]">
      <button type="button" aria-label="Zoom out" className="flex w-2 items-center">
        <svg viewBox="0 0 8 8" className="h-2 w-2" stroke="#222" strokeWidth="1.400" aria-hidden="true">
          <path d="M1 4h6" />
        </svg>
      </button>
      <input
        type="range"
        aria-label="Zoom"
        defaultValue={48}
        className="mx-[3px] h-px w-[65px] appearance-none bg-[#999] [&::-webkit-slider-thumb]:h-[7px] [&::-webkit-slider-thumb]:w-[3px] [&::-webkit-slider-thumb]:appearance-none [&::-webkit-slider-thumb]:border [&::-webkit-slider-thumb]:border-[#555] [&::-webkit-slider-thumb]:bg-[#eee]"
      />
      <button type="button" aria-label="Zoom in" className="flex w-2 items-center">
        <svg viewBox="0 0 8 8" className="h-2 w-2" stroke="#222" strokeWidth="1.400" aria-hidden="true">
          <path d="M1 4h6M4 1v6" />
        </svg>
      </button>
      <span className="ml-[9px]">100%</span>
    </div>
  </footer>
);

const menus = ['File', 'Edit', 'View', 'Insert', 'Format', 'Styles', 'Sheet', 'Data', 'Tools', 'Window', 'Help'];

export default function App() {
  return (
    <div className="flex h-screen flex-col overflow-hidden bg-[#f6f5f4] font-['Noto_Sans',sans-serif] text-[9px] text-[#3a3a3a]">
      <header className="flex h-[17px] shrink-0 items-center justify-between border-b border-[#e9e7e5] pr-[7px]">
        <nav className="flex gap-px pl-px">
          {menus.map(menu => (
            <button key={menu} type="button" className="px-[5px] leading-4">
              {menu}
            </button>
          ))}
        </nav>
        <button type="button" aria-label="Close document">
          <svg viewBox="0 0 8 8" className="h-[7px] w-[7px]" stroke="#222" strokeWidth="2" aria-hidden="true">
            <path d="M1 1l6 6M7 1l-6 6" />
          </svg>
        </button>
      </header>

      <div className="flex h-[27px] shrink-0 items-center pl-0.5" role="toolbar" aria-label="Standard">
        <ToolGroups groups={standardTools} />
      </div>

      <div className="flex h-[27px] shrink-0 items-center pb-px pl-[3px]" role="toolbar" aria-label="Formatting">
        <Combo label="Font Name" value="Calibri" className="mr-1.5 w-[137px]" italic />
        <Combo label="Font Size" value="15 pt" className="mr-1 w-[67px]" />
        <ToolGroups groups={formatTools} />
      </div>

      <div className="flex min-h-0 flex-1">
        <main className="flex min-w-0 flex-1 flex-col">
          <div className="flex h-[29px] shrink-0 items-center pb-[3px] pl-[3px]">
            <Combo label="Name Box" value="A1:H1" className="mr-0.5 w-[107px]" />
            <Separator />
            <button type="button" aria-label="Function Wizard" className="flex w-4 justify-center">
              <Icon className="h-[14px] w-[14px]">{icons.formula}</Icon>
            </button>
            <button type="button" aria-label="Select Function" className="flex w-[23px] items-center gap-1">
              <Icon className="h-3 w-[14px]">{icons.sum}</Icon>
              <Caret />
            </button>
            <button type="button" aria-label="Formula" className="mx-[3px] w-3">
              <Icon className="h-3 w-3">{icons.equals}</Icon>
            </button>
            <input
              aria-label="Input line"
              defaultValue="Instruções de utilização"
              className="h-[17px] min-w-0 flex-1 border border-[#d3d0cd] bg-white px-[3px] text-[#555] outline-none"
            />
            <button type="button" aria-label="Expand Formula Bar" className="flex w-[15px] items-center justify-center">
              <Caret large />
            </button>
          </div>

          <div className="flex min-h-0 flex-1">
            <Sheet />
            <div className="w-[9px] shrink-0 border-t-2 border-[#333] bg-[#cdcdcd] px-px pt-0.5">
              <div className="h-[187px] rounded-full bg-[#858785]" />
            </div>
          </div>
          <div className="flex h-[10px] shrink-0 items-center justify-between bg-[#cdcdcd] pl-0.5">
            <div className="h-1.5 w-[45%] rounded-full bg-[#858785]" />
            <div className="mr-[11px] h-[7px] w-px bg-[#333]" />
          </div>
          <SheetTabs />
        </main>
        <Sidebar />
      </div>

      <StatusBar />
    </div>
  );
}
